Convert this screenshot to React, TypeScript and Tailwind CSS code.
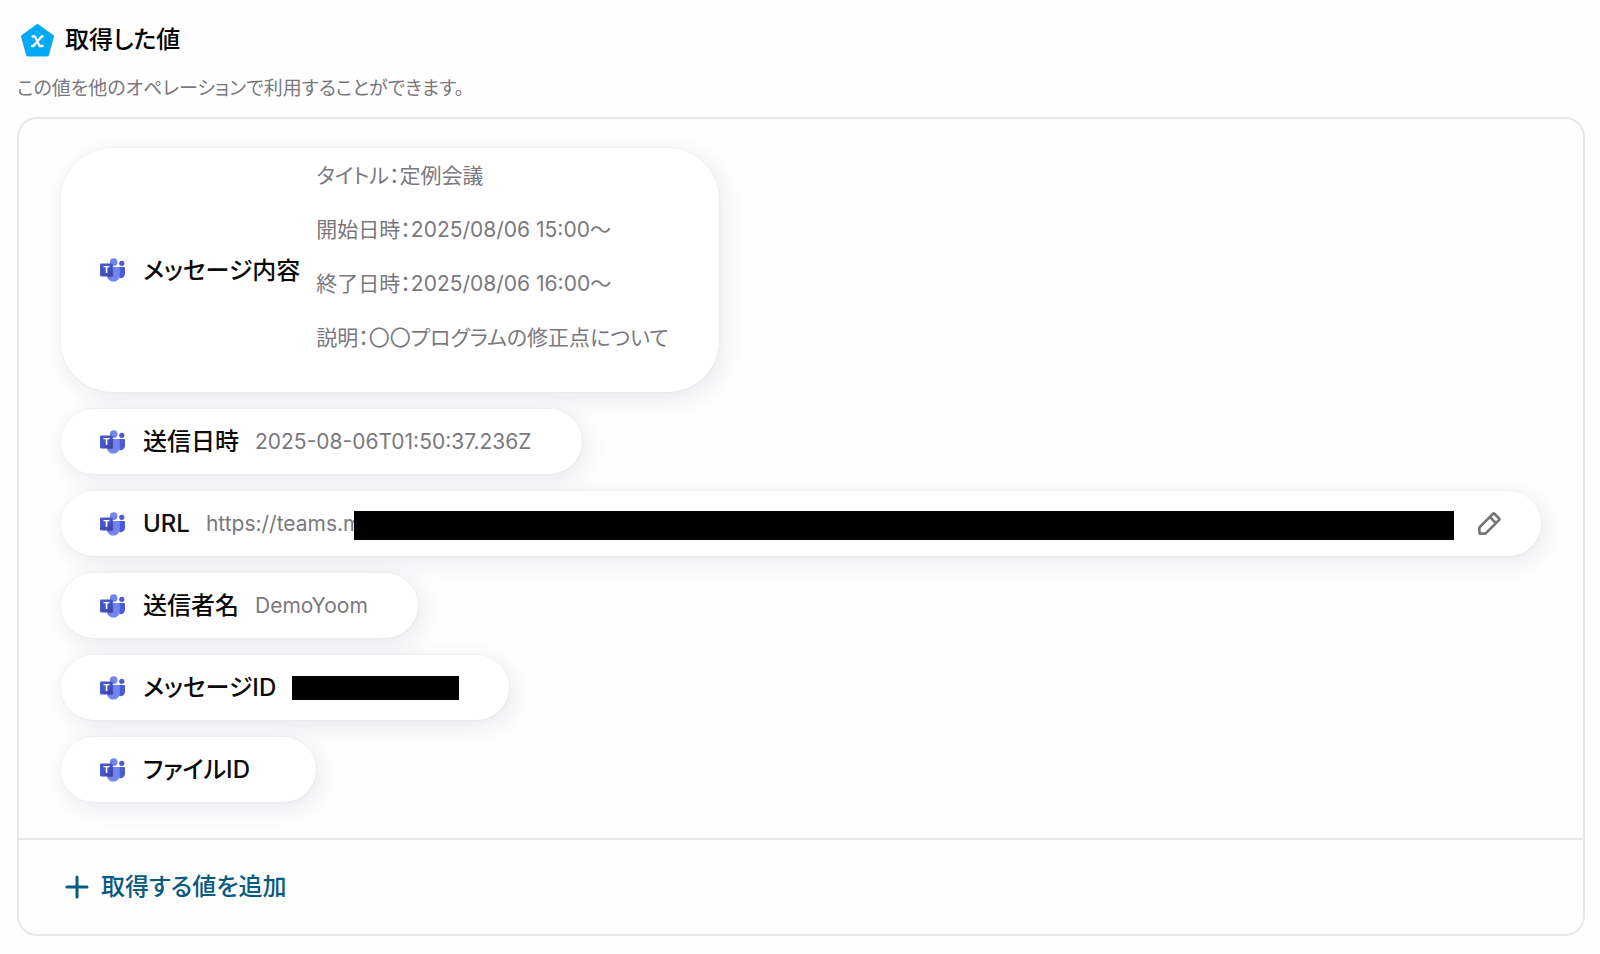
import { PiPencilSimpleBold } from 'react-icons/pi';

interface OutputValue {
  label: string;
  lines?: string[];
  redacted?: 'url' | 'id';
  editable?: boolean;
}

const outputValues: OutputValue[] = [
  {
    label: 'メッセージ内容',
    lines: [
      'タイトル：定例会議',
      '開始日時：2025/08/06 15:00〜',
      '終了日時：2025/08/06 16:00〜',
      '説明：〇〇プログラムの修正点について',
    ],
  },
  { label: '送信日時', lines: ['2025-08-06T01:50:37.236Z'] },
  { label: 'URL', lines: ['https://teams.m'], redacted: 'url', editable: true },
  { label: '送信者名', lines: ['DemoYoom'] },
  { label: 'メッセージID', redacted: 'id' },
  { label: 'ファイルID' },
];

function VariableIcon() {
  return (
    <svg viewBox="0 0 34 34" className="size-[34px] shrink-0" aria-hidden="true">
      <path
        d="M17.5 3 32 13.5 27 31.5H8L3 13.5Z"
        fill="#03a9f4"
        stroke="#03a9f4"
        strokeWidth="4"
        strokeLinejoin="round"
      />
      <path
        d="M12.5 13.5H15L19.5 23H22.5M22.5 13.5H21.5L13.5 23H12"
        fill="none"
        stroke="#fff"
        strokeWidth="2.3"
        strokeLinecap="round"
        strokeLinejoin="round"
      />
    </svg>
  );
}

function TeamsIcon() {
  return (
    <svg viewBox="0 0 2229 2074" className="h-6 w-[25px] shrink-0" aria-hidden="true">
      <defs>
        <linearGradient id="teams-box" x1="0" y1="0" x2="1" y2="1">
          <stop offset="0" stopColor="#4a5bd0" />
          <stop offset="0.5" stopColor="#4453c4" />
          <stop offset="1" stopColor="#3940ab" />
        </linearGradient>
      </defs>
      <path
        fill="#4b5bd4"
        d="M1554.637 777.5h575.713c54.391 0 98.483 44.092 98.483 98.483v524.398c0 199.901-162.051 361.952-361.952 361.952h-1.711c-199.901.028-361.975-162-362.004-361.901V828.971c0-28.427 23.044-51.471 51.471-51.471z"
      />
      <circle fill="#4b5bd4" cx="1943.75" cy="440.583" r="233.25" />
      <circle fill="#7486ea" cx="1218.083" cy="336.917" r="336.917" />
      <path
        fill="#7486ee"
        d="M1667.323 777.5H717.01c-53.743 1.33-96.257 45.931-95.01 99.676v598.105c-7.505 322.519 247.657 590.16 570.167 598.053 322.51-7.893 577.671-275.534 570.167-598.053V877.176c1.245-53.745-41.268-98.346-95.011-99.676z"
      />
      <path
        opacity=".2"
        d="M1192 777.5H717c-54 1.3-96 46-95 99.7v598c-1 70 8 140 25 205h447c76 0 98-60 98-110z"
      />
      <rect fill="url(#teams-box)" y="466.5" width="1140" height="1140" rx="95" />
      <text
        x="570"
        y="1340"
        fill="#fff"
        fontSize="860"
        fontWeight="700"
        textAnchor="middle"
        className="font-['Inter',sans-serif]"
      >
        T
      </text>
    </svg>
  );
}

function ValueCard({ value }: { value: OutputValue }) {
  const multiline = (value.lines?.length ?? 0) > 1;

  return (
    <li
      className={`flex max-w-full items-center rounded-[51px] bg-white py-[14px] pl-[39px] shadow-[4px_6px_24px_rgba(60,30,80,0.10),0_0_3px_rgba(60,30,80,0.06)] ${
        value.editable ? 'w-full pr-[38px]' : 'pr-[50px]'
      }`}
    >
      <TeamsIcon />
      <span className="ml-[18px] shrink-0 text-2xl leading-[37px] font-medium text-[#0b0b0b]">
        {value.label}
      </span>
      <div className={`ml-4 flex items-center ${value.editable ? 'min-w-0 flex-1' : ''}`}>
        {value.lines && (
          <div
            className={`text-[21px] leading-[27px] text-[#7a787d] ${
              multiline ? 'space-y-[27px] pb-[27px]' : ''
            }`}
          >
            {value.lines.map((line) => (
              <p key={line}>{line}</p>
            ))}
          </div>
        )}
        {value.redacted === 'url' && <span className="relative -ml-2 mt-1 h-[29px] flex-1 bg-black" />}
        {value.redacted === 'id' && <span className="h-6 w-[167px] bg-black" />}
      </div>
      {value.editable && (
        <button type="button" aria-label="編集" className="ml-[21px] text-[#757575]">
          <PiPencilSimpleBold className="size-[28px]" />
        </button>
      )}
    </li>
  );
}

export default function App() {
  return (
    <main className="min-h-screen bg-[#fefefe] pt-[21px] pr-[15px] pb-[18px] pl-[17px] font-['Inter','Noto_Sans_CJK_JP',sans-serif] [font-feature-settings:'palt']">
      <header>
        <div className="flex items-center gap-[11px] pl-[3px]">
          <VariableIcon />
          <h1 className="text-2xl leading-[38px] font-medium text-black">取得した値</h1>
        </div>
        <p className="mt-4 text-[19px] leading-7 text-[#7a787d]">
          この値を他のオペレーションで利用することができます。
        </p>
      </header>

      <section className="mt-[14px] rounded-[20px] border-2 border-[#e8e7ea]">
        <ul className="flex flex-col items-start gap-[17px] pt-[29px] pr-[42px] pb-9 pl-[42px]">
          {outputValues.map((value) => (
            <ValueCard key={value.label} value={value} />
          ))}
        </ul>
        <div className="border-t-2 border-[#e8e7ea] px-[46px] py-7">
          <button type="button" className="flex items-center gap-3 text-[#075b80]">
            <svg viewBox="0 0 24 24" className="size-6" aria-hidden="true">
              <path d="M12 2v20M2 12h20" stroke="currentColor" strokeWidth="3" strokeLinecap="round" />
            </svg>
            <span className="text-2xl leading-[38px] font-medium">取得する値を追加</span>
          </button>
        </div>
      </section>
    </main>
  );
}
